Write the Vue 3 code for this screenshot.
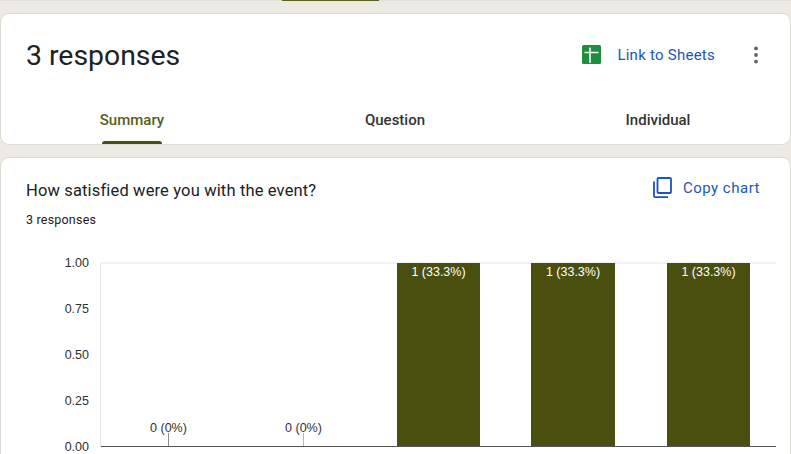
<script setup>
const yLabels = [
  { text: '1.00', y: 267 - 158 },
  { text: '0.75', y: 313 - 158 },
  { text: '0.50', y: 359 - 158 },
  { text: '0.25', y: 405 - 158 },
  { text: '0.00', y: 451 - 158 }
]
const bars = [
  { x: 396, w: 83, label: '1 (33.3%)' },
  { x: 530, w: 84, label: '1 (33.3%)' },
  { x: 666, w: 83, label: '1 (33.3%)' }
]
const zeros = [
  { x: 167, label: '0 (0%)', tick: '#8a8a8a' },
  { x: 302, label: '0 (0%)', tick: '#b5b5b5' }
]
const tabs = [
  { name: 'Summary', active: true },
  { name: 'Question', active: false },
  { name: 'Individual', active: false }
]
</script>

<template>
  <div class="page">
    <div class="top-strip"><span class="top-tab"></span></div>

    <section class="card head-card">
      <div class="head-row">
        <h1 class="title">3 responses</h1>
        <div class="actions">
          <svg class="sheets" width="19" height="19" viewBox="0 0 19 19" aria-hidden="true">
            <rect width="19" height="19" rx="1.5" fill="#1e8e3e" />
            <path d="M2.5 7.5H16.5M8 2.5V18" stroke="#fff" stroke-width="1.5" fill="none" />
          </svg>
          <span class="link">Link to Sheets</span>
          <svg class="more" width="4" height="18" viewBox="0 0 4 18" aria-hidden="true">
            <circle cx="2" cy="2.4" r="1.9" fill="#5f6368" />
            <circle cx="2" cy="9" r="1.9" fill="#5f6368" />
            <circle cx="2" cy="15.6" r="1.9" fill="#5f6368" />
          </svg>
        </div>
      </div>
      <nav class="tabs">
        <div v-for="t in tabs" :key="t.name" class="tab" :class="{ active: t.active }">
          <span>{{ t.name }}</span>
          <i v-if="t.active" class="indicator"></i>
        </div>
      </nav>
    </section>

    <section class="card chart-card">
      <div class="q-row">
        <div>
          <h2 class="question">How satisfied were you with the event?</h2>
          <p class="count">3 responses</p>
        </div>
        <div class="copy">
          <svg width="19" height="21" viewBox="0 0 19 21" aria-hidden="true">
            <path d="M5.5 1h11.5a1 1 0 0 1 1 1V15a1 1 0 0 1-1 1H5.5a1 1 0 0 1-1-1V2a1 1 0 0 1 1-1Z" fill="none" stroke="#1a56b8" stroke-width="1.8" />
            <path d="M1 4.5v14.6a1 1 0 0 0 1 1H15" fill="none" stroke="#1a56b8" stroke-width="1.8" />
          </svg>
          <span>Copy chart</span>
        </div>
      </div>
      <svg class="chart" width="789" height="296" viewBox="0 0 789 296">
        <line x1="99.5" y1="105" x2="99.5" y2="289" stroke="#e4e4e4" />
        <line x1="99" y1="105" x2="775" y2="105" stroke="#e6e6e6" />
        <text v-for="l in yLabels" :key="l.text" x="88" :y="l.y" class="ytick" text-anchor="end">{{ l.text }}</text>
        <rect v-for="b in bars" :key="b.x" :x="b.x" y="105" :width="b.w" height="184" fill="#4a4f10" />
        <text v-for="b in bars" :key="'t' + b.x" :x="b.x + b.w / 2" y="118" class="barlabel" text-anchor="middle">{{ b.label }}</text>
        <template v-for="z in zeros" :key="z.x">
          <line :x1="z.x + 0.5" y1="275" :x2="z.x + 0.5" y2="288" :stroke="z.tick" />
          <text :x="z.x + 0.5" y="274" class="zerolabel" text-anchor="middle">{{ z.label }}</text>
        </template>
        <line x1="100" y1="288.5" x2="775" y2="288.5" stroke="#555" />
      </svg>
    </section>
  </div>
</template>

<style scoped>
.page {
  width: 791px;
  height: 454px;
  overflow: hidden;
  background: #ecebe3;
  box-sizing: border-box;
}
.top-strip {
  height: 1px;
  margin-bottom: 13px;
  background: #e0dfd8;
  display: flex;
  justify-content: flex-start;
  padding-left: 282px;
}
.top-tab {
  display: block;
  width: 97px;
  height: 1px;
  background: #5b6120;
}
.card {
  box-sizing: border-box;
  width: 789px;
  margin-left: 1px;
  background: #fff;
  border-radius: 8px;
  box-shadow: 0 0 0 1px #dcdbd4;
}
.head-card {
  height: 130px;
  margin-bottom: 14px;
  position: relative;
  display: flex;
  flex-direction: column;
}
.head-row {
  height: 83px;
  flex: none;
  display: flex;
  align-items: center;
  justify-content: space-between;
  padding: 0 32px 0 25px;
}
.title {
  margin: 0;
  font: 400 28.4px/36px Roboto, sans-serif;
  color: #202124;
}
.actions {
  display: flex;
  align-items: center;
  margin-top: -2px;
}
.sheets {
  margin-right: 16px;
}
.link {
  font: 400 15px/20px Roboto, sans-serif;
  letter-spacing: 0.25px;
  color: #1a56b8;
  margin-right: 39px;
}
.tabs {
  display: grid;
  grid-template-columns: 262px 264px 262px;
  flex: 1;
}
.tab {
  position: relative;
  display: flex;
  justify-content: center;
  padding-top: 15px;
  font: 500 15px/16px Roboto, sans-serif;
  color: #333;
}
.tab.active {
  color: #585e1e;
}
.indicator {
  position: absolute;
  bottom: 0;
  left: 101px;
  width: 60px;
  height: 3px;
  background: #4a4f10;
  border-radius: 3px 3px 0 0;
}
.chart-card {
  height: 300px;
  border-radius: 8px 8px 0 0;
  position: relative;
}
.q-row {
  display: flex;
  justify-content: space-between;
  align-items: flex-start;
  padding: 23px 30px 0 25px;
}
.question {
  margin: 0;
  font: 400 16.5px/20px Roboto, sans-serif;
  letter-spacing: 0.15px;
  color: #202124;
}
.count {
  margin: 11px 0 0;
  font: 400 12.5px/16px Roboto, sans-serif;
  letter-spacing: 0.2px;
  color: #202124;
}
.copy {
  display: flex;
  align-items: center;
  gap: 11px;
  font: 400 15px/20px Roboto, sans-serif;
  letter-spacing: 0.5px;
  color: #1a56b8;
  margin-top: -4px;
}
.chart {
  position: absolute;
  left: 0;
  top: 0;
}
.ytick,
.zerolabel,
.barlabel {
  font: 12.5px "Liberation Sans", Arial, sans-serif;
}
.ytick,
.zerolabel {
  fill: #303030;
}
.barlabel {
  fill: #fff;
}
</style>

<style>
html,
body {
  margin: 0;
  overflow: hidden;
}
</style>
